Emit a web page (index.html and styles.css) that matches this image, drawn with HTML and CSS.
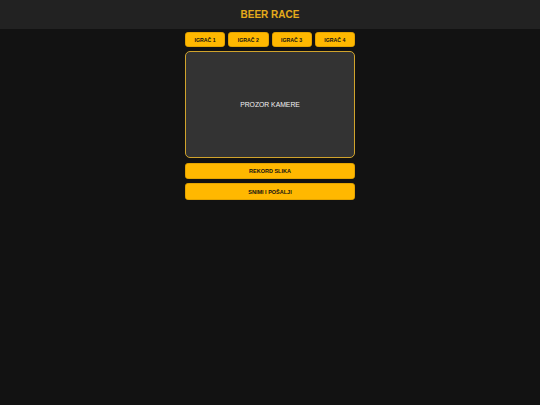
FILE: index.html
```html
<!DOCTYPE html>
<html lang="hr">
<head>
<meta charset="utf-8">
<title>Beer Race</title>
<link rel="stylesheet" href="styles.css">
</head>
<body>
<header class="topbar">
  <h1 class="title">BEER RACE</h1>
</header>
<main class="panel">
  <div class="players">
    <button class="player">IGRAČ 1</button>
    <button class="player">IGRAČ 2</button>
    <button class="player">IGRAČ 3</button>
    <button class="player">IGRAČ 4</button>
  </div>
  <div class="camera">PROZOR KAMERE</div>
  <button class="action action-record">REKORD SLIKA</button>
  <button class="action action-send">SNIMI I POŠALJI</button>
</main>
</body>
</html>
```

FILE: styles.css
```css
* { box-sizing: border-box; }
html, body {
  margin: 0;
  padding: 0;
  background: #121212;
  font-family: "Liberation Sans", Arial, sans-serif;
  height: 100%;
}
.topbar {
  height: 29px;
  background: #222222;
  display: flex;
  align-items: center;
  justify-content: center;
}
.title {
  margin: 0;
  font-size: 10px;
  font-weight: bold;
  color: #e5ab1b;
}
.panel {
  width: 170px;
  margin: 3px auto 0;
  display: flex;
  flex-direction: column;
}
.players {
  display: grid;
  grid-template-columns: repeat(4, 1fr);
  gap: 3px;
}
.player, .action {
  border: none;
  background: #ffb800;
  color: #111111;
  font-family: "Liberation Sans", Arial, sans-serif;
  font-weight: bold;
  padding: 0;
  margin: 0;
  border-radius: 4px;
  box-shadow: 0 0 0 0.5px #c98f00 inset;
}
.player {
  height: 15px;
  font-size: 5.2px;
}
.camera {
  margin-top: 4px;
  height: 107px;
  background: #333333;
  border: 1px solid #d0a32c;
  border-radius: 5px;
  display: flex;
  align-items: center;
  justify-content: center;
  color: #f2f2f2;
  font-size: 6.8px;
}
.action {
  height: 16px;
  font-size: 5.5px;
}
.action-record { margin-top: 5px; }
.action-send { margin-top: 4px; height: 17px; }
```
